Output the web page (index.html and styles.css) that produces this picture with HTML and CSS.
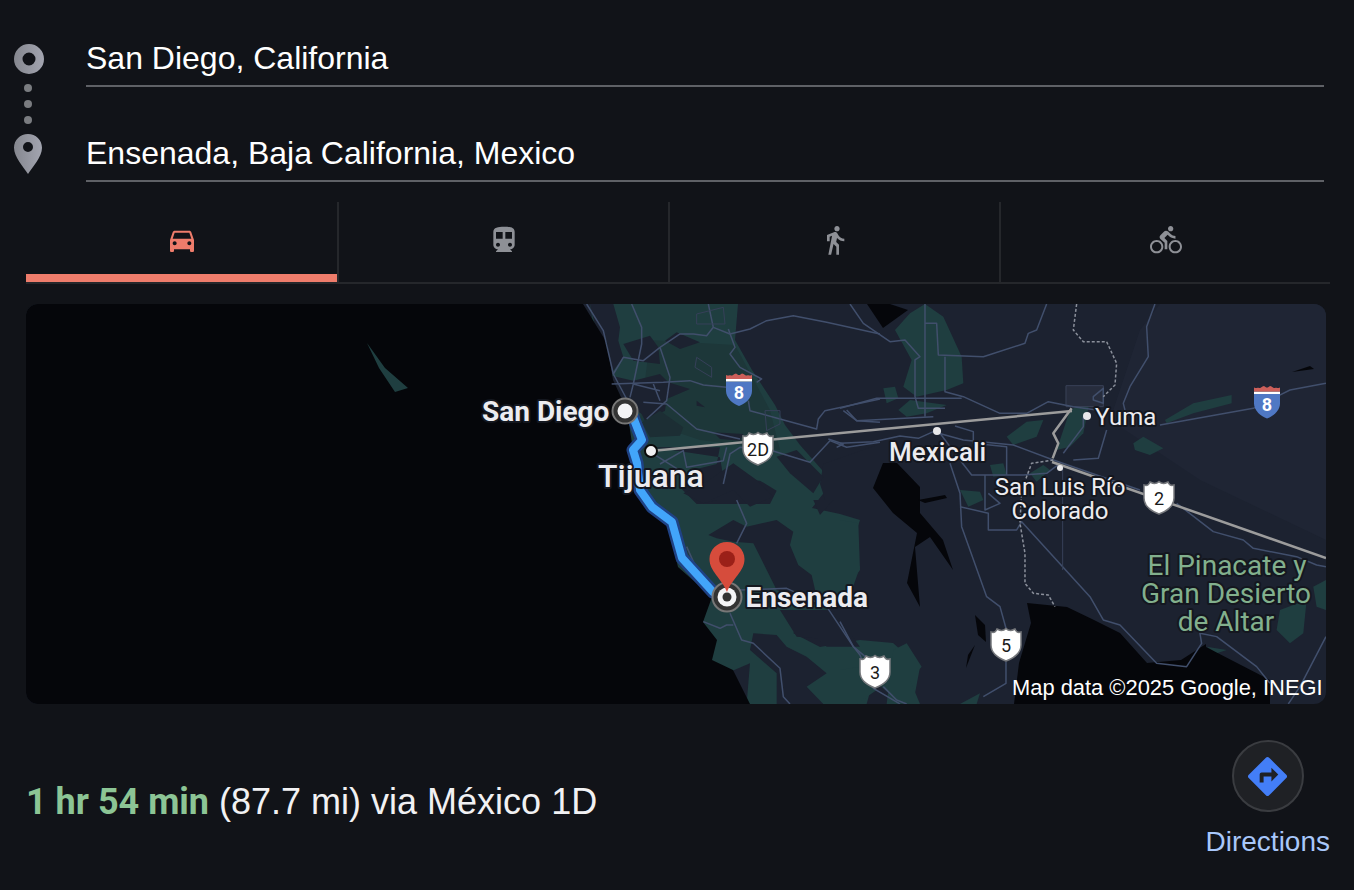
FILE: index.html
```html
<!DOCTYPE html>
<html lang="en">
<head>
<meta charset="utf-8">
<title>Directions</title>
<link rel="stylesheet" href="styles.css">
</head>
<body>
<section class="route">
  <svg class="stops" viewBox="13 44 32 132" aria-hidden="true">
    <defs>
      <linearGradient id="stopfill" x1="0" y1="0" x2="1" y2="0"><stop offset="0" stop-color="#85878f"/><stop offset="1" stop-color="#a3a5b0"/></linearGradient>
    </defs>
    <path fill="url(#stopfill)" fill-rule="evenodd" d="M29 44a15 15 0 1 0 0 30a15 15 0 1 0 0-30zM29 52.500a6.500 6.500 0 1 1 0 13a6.500 6.500 0 1 1 0-13z"/>
    <circle class="dot" cx="28" cy="88" r="4"/>
    <circle class="dot" cx="28" cy="104" r="4"/>
    <circle class="dot" cx="28" cy="120" r="4"/>
    <path fill="url(#stopfill)" fill-rule="evenodd" d="M28 134c-7.800 0-14 6-14 13.800c0 9.200 9.500 19.200 14 26.200c4.500-7 14-17 14-26.200c0-7.800-6.200-13.800-14-13.800zM28 142a5 5 0 1 1 0 10a5 5 0 1 1 0-10z"/>
  </svg>
  <div class="fields">
    <div class="field">San Diego, California</div>
    <div class="field">Ensenada, Baja California, Mexico</div>
  </div>
</section>

<nav class="tabs">
  <div class="tab active"><svg class="ticon" viewBox="0 0 24 24"><path d="M18.920 6.010C18.720 5.420 18.160 5 17.500 5h-11c-.66 0-1.210.42-1.420 1.010L3 12v8c0 .55.45 1 1 1h1c.55 0 1-.45 1-1v-1h12v1c0 .55.45 1 1 1h1c.55 0 1-.45 1-1v-8l-2.080-5.990zM6.500 16c-.83 0-1.500-.67-1.500-1.500S5.670 13 6.500 13s1.500.67 1.500 1.500S7.330 16 6.500 16zm11 0c-.83 0-1.500-.67-1.500-1.500s.67-1.500 1.500-1.500 1.500.67 1.500 1.500-.67 1.500-1.500 1.500zM5 11l1.500-4.500h11L19 11H5z"/></svg></div>
  <div class="tab"><svg class="ticon" viewBox="0 0 24 24"><path fill-rule="evenodd" d="M12 2c-4.420 0-8 .5-8 4v9.500C4 17.430 5.570 19 7.500 19L6 20.500v.5h12v-.5L16.500 19c1.930 0 3.500-1.570 3.500-3.500V6c0-3.500-3.580-4-8-4zM7.500 17c-.83 0-1.500-.67-1.500-1.500S6.670 14 7.500 14s1.500.67 1.500 1.500S8.330 17 7.500 17zM6 6h5v5H6zM13 6h5v5h-5zM16.500 17c-.83 0-1.500-.67-1.500-1.500s.67-1.500 1.500-1.500 1.500.67 1.500 1.500-.67 1.500-1.500 1.500z"/></svg></div>
  <div class="tab"><svg class="ticon" viewBox="0 0 24 24"><path d="M13.500 5.500c1.100 0 2-.9 2-2s-.9-2-2-2-2 .9-2 2 .9 2 2 2zM9.800 8.900L7 23h2.100l1.800-8 2.100 2v6h2v-7.500l-2.100-2 .6-3C14.800 12 16.800 13 19 13v-2c-1.900 0-3.500-1-4.300-2.400l-1-1.600c-.4-.6-1-1-1.700-1-.3 0-.5.1-.8.1L6 8.300V13h2V9.600l1.800-.7"/></svg></div>
  <div class="tab"><svg class="ticon" viewBox="0 0 24 24"><path d="M15.500 5.500c1.100 0 2-.9 2-2s-.9-2-2-2-2 .9-2 2 .9 2 2 2zM5 12c-2.800 0-5 2.200-5 5s2.200 5 5 5 5-2.200 5-5-2.200-5-5-5zm0 8.500c-1.900 0-3.500-1.600-3.500-3.500s1.600-3.500 3.500-3.500 3.500 1.600 3.500 3.500-1.600 3.500-3.500 3.500zm5.800-10l2.400-2.400.8.8c1.300 1.300 3 2.100 5.100 2.100V9c-1.500 0-2.700-.6-3.600-1.500l-1.900-1.900c-.5-.4-1-.6-1.600-.6s-1.100.2-1.400.6L7.800 8.400c-.4.4-.6.9-.6 1.400 0 .6.2 1.100.6 1.400L11 14v5h2v-6.200l-2.200-2.300zM19 12c-2.800 0-5 2.200-5 5s2.200 5 5 5 5-2.200 5-5-2.200-5-5-5zm0 8.500c-1.900 0-3.500-1.600-3.500-3.500s1.600-3.500 3.500-3.500 3.500 1.600 3.500 3.500-1.600 3.500-3.500 3.500z"/></svg></div>
</nav>

<figure class="map">
  <svg class="mapsvg" viewBox="26 304 1300 400" role="img" aria-label="Route map">
    <defs>
      <symbol id="shield" viewBox="0 0 34 36">
        <path class="shield-edge" d="M2 5c3 1 5 0 6-3c2 1 3 1.500 4.500 1.500c2 0 3-.5 4.500-2c1.500 1.500 2.500 2 4.500 2c1.500 0 2.500-.5 4.500-1.500c1 3 3 4 6 3v13c0 8-7 13-15 16c-8-3-15-8-15-16z"/>
      </symbol>
      <symbol id="interstate" viewBox="0 0 26 36">
        <path fill="#4f78c4" d="M0 10.500H26V20C26 27 19 33 13 35C7 33 0 27 0 20Z"/>
        <rect y="8" width="26" height="2.500" fill="#fff"/>
        <path fill="#cc5f5a" d="M0 8V4c2 .8 3 .8 4 0c1 .8 2 .8 3 0c1-.6 2-1.500 3-1.500c1 .8 2 1.500 3 1.500s2-.7 3-1.500c1 0 2 .9 3 1.500c1 .8 2 .8 3 0c1 .8 2 .8 4 0V8Z"/>
      </symbol>
    </defs>

    <rect class="land" x="26" y="304" width="1300" height="400"/>
    <path class="land-light" d="M1160 304H1326V540L1200 480L1110 420L1140 330Z"/>

    <!-- vegetation, northern block and Baja -->
    <path class="green" d="M590 304H738L735 340L752 370L775 405L785 425L800 445L822 470L826 490L812 508L840 514L860 520L850 550L860 567L853 587L827 610L793 633L820 647L860 640L893 643L920 667L913 704H720L620 500Z"/>
    <path class="green-deep" d="M650 340L735 345L770 410L780 450L700 440L640 420Z"/>

    <g transform="translate(580 304) scale(.3333)">
      <path class="hole" d="M30 0H100L120 70L115 110L130 160L100 200L90 240L75 240L60 130Z"/>
      <path class="hole" d="M130 120L210 95L235 130L240 180L160 170Z"/>
      <path class="hole" d="M255 110L290 85L360 115L300 135Z"/>
      <path class="hole" d="M95 215L160 230L240 210L265 235L330 255L260 285L255 320L195 350L185 330L100 270Z"/>
      <path class="hole" d="M350 290L375 310L350 305Z"/>
      <path class="hole" d="M400 385L490 390L480 410L420 405Z"/>
      <path class="hole-soft" d="M185 355L240 320L310 370L300 395L210 400Z"/>
      <path class="hole" d="M220 430L420 430L410 480L330 500L300 550L350 600L570 600L590 560L540 530L430 520L420 460Z"/>
      <path class="hole" d="M730 480L900 420V600H740L720 540Z"/>
    </g>
    <g transform="translate(340 300) scale(.3333)">
      <path class="hole" d="M1030 580L1100 545L1180 490L1250 540L1300 590L1230 620L1180 570L1090 610Z"/>
      <path class="hole" d="M1310 470L1370 450L1450 530L1420 580L1350 520Z"/>
    </g>
    <g transform="translate(620 500) scale(.3333)">
      <path class="hole" d="M265 105L340 60L380 80L470 60L520 95L510 135L535 195L575 225L590 290L620 325L545 300L470 270L430 190L400 130L340 125L290 115Z"/>
      <path class="hole" d="M480 330L640 330L720 440L620 440L590 415L530 410Z"/>
      <path class="hole" d="M400 400L470 405L500 440L560 470L620 520L560 560L610 612H470L470 520L390 450Z"/>
      <path class="hole" d="M320 520L390 490L380 612H360Z"/>
      <path class="hole" d="M580 0H640L600 45Z"/>
      <path class="hole" d="M230 0H290L250 10Z"/>
      <path class="hole" d="M760 540L830 600L880 612H740Z"/>
    </g>

    <g transform="translate(840 300) scale(.3333)">
      <path class="green" d="M165 90L210 40L255 12L310 50L365 170L370 250L320 270L230 290L190 260L215 180Z"/>
      <path class="green" d="M175 330L210 300L320 315L260 340L200 350Z"/>
      <path class="green" d="M130 265L165 260L175 295L140 310Z"/>
      <path class="green" d="M500 410L560 365L610 360L590 410L520 435Z"/>
      <path class="green" d="M650 450L690 330L750 300L730 400L690 440Z"/>
      <path class="green" d="M975 360L1060 310L1175 285L1175 310L1060 340L980 370Z"/>
      <path class="green" d="M880 430L910 410L970 445L930 465L885 450Z"/>
      <path class="green" d="M450 495L490 490L500 525L460 530Z"/>
      <path class="green" d="M570 520L610 495L630 510L590 545Z"/>
      <path class="green" d="M360 570L420 575L430 600L385 620Z"/>
      <path class="green" d="M0 660L55 670L60 810L30 850L0 850Z"/>
      <path class="green" d="M1320 930L1400 900L1390 1000L1350 1030L1310 990Z"/>
      <path class="green" d="M1420 860L1458 840V930L1430 920Z"/>
      <path class="green" d="M160 1050L200 1030L245 1100L210 1140L240 1212H140Z"/>
      <path class="green" d="M0 1110L60 1100L110 1170L50 1212H0Z"/>
      <path class="green" d="M360 1212L420 1180L410 1212Z"/>
      <path class="green" d="M1100 1040L1160 1050L1130 1060Z"/>
      <path class="box" d="M678 257H790V320H678Z"/>
    </g>

    <!-- water -->
    <path class="water" d="M26 304H583L607 343L613 380L627 410L633 450L637 493L660 517L667 523L678 567L712 597L703 622L717 640L712 660L733 670L750 704H26Z"/>
    <path class="green" d="M367 343L379 368L395 392L408 388L385 368Z"/>
    <path class="water" d="M1027 603L1031 623L1019 663L1014 704H1270L1270 680L1206 647L1206 644L1181 660L1147 663L1120 633L1094 620L1067 607Z"/>
    <path class="water" d="M883 463L873 488L893 513L917 533L907 583L920 607L915 547L930 537L953 570L943 540L920 513L920 487L897 463Z"/>
    <path class="water" d="M867 304L883 328L908 310L890 304Z"/>
    <path class="water" d="M975 615L985 625L986 642L978 635Z"/>
    <path class="water" d="M968 655L975 645L966 668Z"/>
    <path class="water" d="M1292 372L1310 366L1314 369Z"/>
    <path class="water" d="M918 500L945 495L947 498L925 503Z"/>

    <!-- road network -->
    <g transform="translate(580 304) scale(.3333)" class="roads">
      <path d="M20 0L70 80L100 210L140 285"/>
      <path d="M100 210L130 160L190 170L240 130"/>
      <path d="M155 0L185 70L185 120L160 240L150 280"/>
      <path d="M95 240L250 235L330 230L370 243L440 250"/>
      <path d="M240 130L270 220L260 290L200 345"/>
      <path d="M240 130L300 90L340 90L380 95L400 70L385 0"/>
      <path d="M400 70L450 90L510 75L560 50L640 35L740 55L900 90"/>
      <path d="M445 75L465 130L450 150L480 190L545 225L530 235"/>
      <path d="M505 290L510 320L600 345L710 375L715 345L735 320L900 285"/>
      <path d="M790 320L830 350L900 355"/>
      <path d="M190 295L260 300L350 375L480 405"/>
      <path d="M240 480L310 440L320 490L430 470L440 430"/>
      <path d="M430 540L450 450L480 430L560 435L690 475L750 410L800 430L900 415"/>
      <path d="M745 405L790 420L770 430"/>
      <path d="M220 450L300 500"/>
      <path d="M220 240L240 290M160 240L240 260"/>
      <path class="thin" d="M555 320H600V360L560 380Z"/>
      <path class="thin" d="M350 30L430 10L435 60L350 60Z"/>
      <path class="thin" d="M350 160L395 190L395 220L345 190Z"/>
    </g>
    <g transform="translate(620 500) scale(.3333)" class="roads">
      <path d="M350 0L380 70L350 130"/>
      <path d="M200 140L240 230"/>
      <path d="M360 270L500 265L620 320L700 440L760 490"/>
      <path d="M330 340L365 420L400 430L480 505L490 590L510 612"/>
      <path d="M250 365L300 385L320 375L340 375"/>
      <path d="M790 560L830 600L860 612"/>
    </g>
    <g transform="translate(840 300) scale(.3333)" class="roads">
      <path d="M30 12L70 70L150 125L195 120L240 170L225 180L225 290L235 325L315 325"/>
      <path d="M255 12V350"/>
      <path d="M255 70L290 70L295 165L430 170L555 130L565 100L590 90L620 12"/>
      <path d="M315 170V275L370 290L480 340L560 340L625 305L700 320L770 330"/>
      <path d="M0 325L110 295L365 295"/>
      <path d="M20 330L50 362L280 350"/>
      <path d="M0 430L100 425L180 408L235 415L280 395L370 420L520 435L640 480L900 570"/>
      <path d="M345 378L400 395L400 430L500 440V525"/>
      <path d="M300 400L360 480L395 525L550 525L620 520L660 490"/>
      <path d="M330 490L360 580L365 680L440 890L480 920L498 985"/>
      <path d="M498 1085V1150L430 1190"/>
      <path d="M360 620L445 640V690H530L545 665L750 890L790 960L840 975L950 1090L1040 1100L1085 1030L1080 1000L1130 1010L1250 1100L1290 1150"/>
      <path class="thin" d="M668 500V810"/>
      <path d="M1010 610L1120 695L1210 720L1240 745L1370 770L1430 795L1458 800"/>
      <path d="M945 12L920 80L925 170L870 260L850 310L855 330"/>
      <path d="M730 350V380L670 460"/>
      <path d="M800 390L775 475L700 480"/>
      <path d="M960 375L1240 325L1350 270L1458 250"/>
      <path d="M0 965L40 1040L60 1065L100 1165L180 1212"/>
      <path d="M1458 1010L1380 1160L1345 1212"/>
      <path d="M435 525V630L480 610L445 580"/>
      <path d="M760 290L790 265L790 310L760 300Z"/>
      <path class="border" d="M710 12L700 90L730 125L800 125L830 190L825 255L790 290"/>
      <path class="border" d="M640 480L575 490L545 570L540 670L555 760L555 850L580 880L625 885L645 920"/>
      <path class="highway" d="M695 325L640 400L655 430L638 475"/>
    </g>

    <!-- highways -->
    <path class="highway" d="M651 451L1072 411"/>
    <path class="highway" d="M1052 462L1326 558"/>

    <!-- route -->
    <path class="route-casing" d="M633 417L642 440L633 450L637 463L640 490L652 507L672 522L682 558L713 592L727 598"/>
    <path class="route-line" d="M633 417L642 440L633 450L637 463L640 490L652 507L672 522L682 558L713 592L727 598"/>

    <!-- shields -->
    <use href="#interstate" x="726" y="371" width="26" height="36"/>
    <text class="shield-num blue" x="739" y="398.500">8</text>
    <use href="#interstate" x="1254" y="383.500" width="26" height="36"/>
    <text class="shield-num blue" x="1267" y="411">8</text>
    <use href="#shield" x="741" y="431" width="34" height="36"/>
    <text class="shield-num" x="758" y="456">2D</text>
    <use href="#shield" x="1142" y="480" width="34" height="36"/>
    <text class="shield-num" x="1159" y="505">2</text>
    <use href="#shield" x="989" y="627" width="34" height="36"/>
    <text class="shield-num" x="1006" y="652">5</text>
    <use href="#shield" x="858" y="654" width="34" height="36"/>
    <text class="shield-num" x="875" y="679">3</text>

    <!-- markers -->
    <circle class="m-ring" cx="625" cy="411" r="12.500"/>
    <circle class="m-white" cx="625" cy="411" r="7.500"/>
    <circle class="m-small" cx="651" cy="451" r="6"/>
    <circle class="m-plain" cx="937" cy="431" r="4"/>
    <circle class="m-plain" cx="1087" cy="416" r="4"/>
    <circle class="m-plain" cx="1060" cy="468" r="3"/>
    <circle class="m-ring" cx="727" cy="597" r="14.500"/>
    <circle class="m-white" cx="727" cy="597" r="9.500"/>
    <circle class="m-hole" cx="727" cy="597" r="4.500"/>
    <path class="pin" d="M727 542c-9.700 0-17.500 7.600-17.500 17c0 12.500 12 19 17.500 33c5.500-14 17.500-20.500 17.500-33c0-9.400-7.800-17-17.500-17z"/>
    <circle class="pin-core" cx="727" cy="559" r="8"/>

    <!-- labels -->
    <text class="lbl bold" x="482" y="421" font-size="28">San Diego</text>
    <text class="lbl med" x="598" y="487" font-size="32">Tijuana</text>
    <text class="lbl bold" x="745.500" y="607" font-size="28">Ensenada</text>
    <text class="lbl med" x="889" y="461" font-size="26">Mexicali</text>
    <text class="lbl" x="1095" y="425" font-size="24">Yuma</text>
    <text class="lbl mid" x="1060" y="495" font-size="24">San Luis Río</text>
    <text class="lbl mid" x="1060" y="519" font-size="24">Colorado</text>
    <text class="lbl mid park" x="1227" y="575" font-size="28">El Pinacate y</text>
    <text class="lbl mid park" x="1226" y="603" font-size="28">Gran Desierto</text>
    <text class="lbl mid park" x="1226" y="631" font-size="28">de Altar</text>
    <text class="attrib" x="1012" y="695">Map data ©2025 Google, INEGI</text>
  </svg>
</figure>

<section class="summary">
  <p class="eta"><strong class="time">1 hr 54 min</strong> (87.7 mi) via México 1D</p>
  <div class="action">
    <span class="action-btn">
      <svg class="action-icon" viewBox="0 0 24 24"><path d="M21.710 11.290l-9-9c-.39-.39-1.020-.39-1.410 0l-9 9c-.39.39-.39 1.020 0 1.410l9 9c.39.39 1.020.39 1.410 0l9-9c.39-.38.39-1.010 0-1.410zM14 14.500V12h-4v3H8v-4c0-.55.45-1 1-1h5V7.500l3.500 3.500-3.500 3.500z"/></svg>
    </span>
    <span class="action-label">Directions</span>
  </div>
</section>
</body>
</html>
```
FILE: styles.css
```css
* { box-sizing: border-box; }
html, body { margin: 0; height: 100%; }
body {
  background: #111318;
  color: #fff;
  font-family: "Liberation Sans", Arial, sans-serif;
  padding-top: 31px;
  overflow: hidden;
}

/* origin / destination */
.route { display: flex; align-items: flex-start; padding-right: 30px; }
.stops { width: 32px; height: 132px; margin: 13px 41px 0 13px; flex: none; }
.dot { fill: #7a7c80; }
.fields { flex: 1; display: flex; flex-direction: column; gap: 39px; }
.field {
  height: 56px;
  line-height: 54px;
  font-size: 32px;
  border-bottom: 2px solid #5f6166;
  color: #fff;
}

/* travel modes */
.tabs {
  display: grid;
  grid-template-columns: 313px 331px 331px 1fr;
  margin: 20px 24px 0 26px;
  height: 82px;
  border-bottom: 2px solid #25272b;
}
.tab {
  position: relative;
  display: flex;
  align-items: center;
  justify-content: center;
  border-right: 2px solid #25272b;
  padding-bottom: 4px;
}
.tab:last-child { border-right: 0; }
.ticon { width: 32px; height: 32px; fill: #8e9096; }
.tab.active .ticon { fill: #ee7c6b; }
.tab.active::after {
  content: "";
  position: absolute;
  left: 0;
  right: 0;
  bottom: 0;
  height: 8px;
  background: #ee7c6b;
}

/* map */
.map {
  margin: 20px 0 0 26px;
  width: 1300px;
  height: 400px;
  border-radius: 12px;
  overflow: hidden;
}
.mapsvg { display: block; width: 1300px; height: 400px; }
.land { fill: #1c2230; }
.land-light { fill: #1f2534; }
.green { fill: #1f3e40; }
.green-deep { fill: #1d3739; }
.hole { fill: #1c2230; }
.hole-soft { fill: #1c2e34; }
.water { fill: #05060a; }
.box { fill: #272d3d; stroke: #3a4257; stroke-width: 3; }
.roads path {
  fill: none;
  stroke: #414f6c;
  stroke-width: 1.500;
  vector-effect: non-scaling-stroke;
  stroke-linejoin: round;
}
.roads path.thin { stroke: #364059; stroke-width: 1; }
.roads path.border {
  stroke: #8b909b;
  stroke-width: 1.500;
  stroke-dasharray: 3 2;
}
.highway, .roads path.highway {
  fill: none;
  stroke: #9c9c9c;
  stroke-width: 2.500;
  vector-effect: non-scaling-stroke;
}
.route-casing, .route-line { fill: none; stroke-linejoin: round; stroke-linecap: round; }
.route-casing { stroke: #1f4285; stroke-width: 13; }
.route-line { stroke: #42a5fa; stroke-width: 8; }

.shield-edge { fill: #fff; stroke: #77797d; stroke-width: 1.500; }
.shield-num {
  font-family: Roboto, sans-serif;
  font-size: 18px;
  fill: #1a1a1a;
  text-anchor: middle;
}
.shield-num.blue { fill: #fff; font-weight: 700; font-size: 18px; }

.m-ring { fill: #333; stroke: #777; stroke-width: 2; }
.m-white { fill: #f4f4f6; }
.m-hole { fill: #333; }
.m-small { fill: #f0f0f2; stroke: #0a0a0a; stroke-width: 2; }
.m-plain { fill: #e8e8ea; }
.pin { fill: #d64c3c; }
.pin-core { fill: #9b2018; }

.lbl {
  font-family: Roboto, sans-serif;
  fill: #ececf0;
  stroke: #14171f;
  stroke-width: 4px;
  stroke-linejoin: round;
  paint-order: stroke;
}
.lbl.bold { font-weight: 700; }
.lbl.med { font-weight: 500; }
.lbl.mid { text-anchor: middle; }
.lbl.park { fill: #82b08d; }
.attrib {
  font-family: "Liberation Sans", Arial, sans-serif;
  font-size: 21.900px;
  fill: #fff;
}

/* summary */
.summary {
  display: flex;
  justify-content: space-between;
  align-items: flex-start;
  margin: 36px 24px 0 26px;
}
.eta {
  margin: 42px 0 0;
  font-size: 36px;
  line-height: 40px;
  color: #f1f1f3;
}
.time { color: #8cc595; font-family: Roboto, sans-serif; font-weight: 700; }
.action { display: flex; flex-direction: column; align-items: center; gap: 14px; }
.action-btn {
  width: 72px;
  height: 72px;
  border-radius: 50%;
  background: #1f2125;
  border: 2px solid #3a3c40;
  display: flex;
  align-items: center;
  justify-content: center;
}
.action-icon { width: 47px; height: 47px; fill: #437ef7; }
.action-label { font-size: 28px; line-height: 32px; color: #a8c7fa; }
```
